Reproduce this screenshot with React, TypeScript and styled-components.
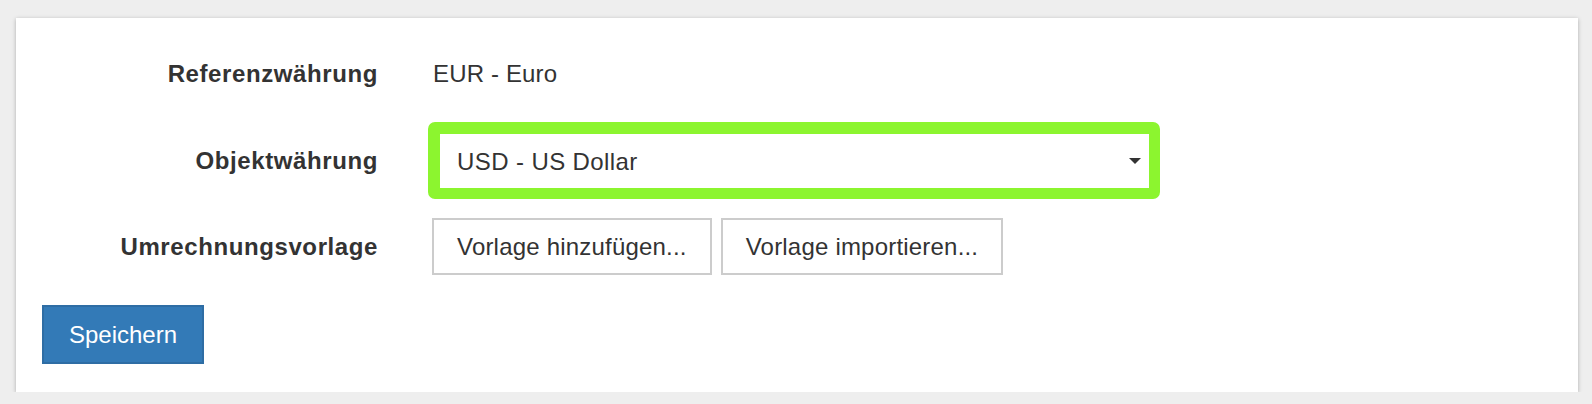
import styled, { createGlobalStyle } from "styled-components";

const GlobalStyle = createGlobalStyle`
  html, body {
    margin: 0;
    padding: 0;
    background: #eeeeee;
  }
  body {
    font-family: "Liberation Sans", Arial, Helvetica, sans-serif;
    color: #333;
  }
  * {
    box-sizing: border-box;
  }
`;

export default function App() {
  return (
    <>
      <GlobalStyle />
      <Page>
        <Panel>
          <FormRow $mb={31}>
            <Label>Referenzwährung</Label>
            <StaticValue>EUR - Euro</StaticValue>
          </FormRow>
          <FormRow $mb={19}>
            <Label>Objektwährung</Label>
            <HighlightFrame>
              <SelectBox defaultValue="USD">
                <option value="EUR">EUR - Euro</option>
                <option value="USD">USD - US Dollar</option>
                <option value="CHF">CHF - Schweizer Franken</option>
              </SelectBox>
              <Caret />
            </HighlightFrame>
          </FormRow>
          <FormRow $mb={30}>
            <Label>Umrechnungsvorlage</Label>
            <ButtonGroup>
              <DefaultButton type="button">Vorlage hinzufügen...</DefaultButton>
              <DefaultButton type="button">Vorlage importieren...</DefaultButton>
            </ButtonGroup>
          </FormRow>
          <PrimaryButton type="button">Speichern</PrimaryButton>
        </Panel>
      </Page>
    </>
  );
}

const Page = styled.div`
  padding: 18px 0 0 16px;
`;

const Panel = styled.div`
  width: 1562px;
  height: 374px;
  background: #fff;
  box-shadow: 0 1px 4px rgba(0, 0, 0, 0.28);
  padding: 39px 0 0 26px;
`;

const FormRow = styled.div<{ $mb: number }>`
  display: grid;
  grid-template-columns: 336px 1fr;
  column-gap: 50px;
  align-items: center;
  margin-bottom: ${(p) => p.$mb}px;
`;

const Label = styled.label`
  text-align: right;
  font-weight: bold;
  font-size: 24px;
  line-height: 34px;
  letter-spacing: 0.6px;
  color: #333;
`;

const StaticValue = styled.div`
  font-size: 24px;
  line-height: 34px;
  padding-left: 5px;
  letter-spacing: 0.15px;
  color: #333;
`;

const HighlightFrame = styled.div`
  position: relative;
  width: 732px;
  border: 12px solid #8cf52f;
  border-right-width: 11px;
  border-bottom-width: 11px;
  border-radius: 7px;
`;

const SelectBox = styled.select`
  display: block;
  width: 100%;
  height: 54px;
  margin: 0;
  padding: 0 40px 0 17px;
  border: none;
  border-radius: 0;
  background: #fff;
  appearance: none;
  font-family: inherit;
  font-size: 24px;
  letter-spacing: 0.4px;
  color: #333;
  outline: none;
`;

const Caret = styled.span`
  position: absolute;
  right: 8px;
  top: 24px;
  width: 0;
  height: 0;
  border-left: 6px solid transparent;
  border-right: 6px solid transparent;
  border-top: 6px solid #333;
  pointer-events: none;
`;

const ButtonGroup = styled.div`
  display: flex;
  gap: 9px;
  padding-left: 4px;
`;

const DefaultButton = styled.button`
  height: 57px;
  padding: 0 23px;
  background: #fff;
  border: 2px solid #ccc;
  border-radius: 0;
  font-family: inherit;
  font-size: 24px;
  letter-spacing: 0.2px;
  color: #333;
  cursor: pointer;
`;

const PrimaryButton = styled.button`
  width: 162px;
  height: 59px;
  background: #337ab7;
  border: 2px solid #2e6da4;
  border-radius: 0;
  font-family: inherit;
  font-size: 24px;
  color: #fff;
  cursor: pointer;
`;
